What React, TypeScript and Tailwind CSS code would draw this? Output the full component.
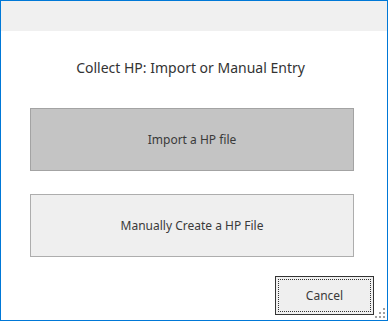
import React from 'react';

const font = { fontFamily: '"Noto Sans", "Open Sans", Arial, sans-serif' };

function SizeGrip() {
  // Windows-style triangular grip in the bottom-right corner
  const dots = [
    [8, 0],
    [4, 4],
    [8, 4],
    [0, 8],
    [4, 8],
    [8, 8],
  ];
  return (
    <svg
      width="11"
      height="11"
      viewBox="0 0 11 11"
      className="absolute bottom-px right-px"
    >
      {dots.map(([x, y]) => (
        <rect key={`${x}-${y}`} x={x} y={y} width="2" height="2" fill="#a0a0a0" />
      ))}
    </svg>
  );
}

export default function App() {
  return (
    <div
      className="relative flex h-[321px] w-[388px] flex-col border border-[#0078d7] bg-white text-[#333333]"
      style={font}
    >
      <div className="h-[30px] bg-[#f0f0f0]" />

      <div className="flex h-[77px] items-center justify-center pb-[5px] pr-[7px] text-[14px]">
        Collect HP: Import or Manual Entry
      </div>

      <div className="flex flex-col gap-[23px] px-[29px]">
        <button
          type="button"
          className="flex h-[63px] w-[324px] items-center justify-center border border-[#a3a3a3] bg-[#c4c4c4] text-[12px] text-[#3a3a3a]"
        >
          Import a HP file
        </button>
        <button
          type="button"
          className="flex h-[63px] w-[324px] items-center justify-center border border-[#adadad] bg-[#efefef] text-[12px] text-[#3a3a3a]"
        >
          Manually Create a HP File
        </button>
      </div>

      <div className="mt-[19px] flex justify-end pr-[13px]">
        <button
          type="button"
          className="h-[39px] w-[99px] border border-[#333333] bg-[#efefef] p-[2px] text-[12px] text-[#3a3a3a]"
        >
          <span className="flex h-full w-full items-center justify-center border border-dotted border-[#333333]">
            Cancel
          </span>
        </button>
      </div>

      <SizeGrip />
    </div>
  );
}
